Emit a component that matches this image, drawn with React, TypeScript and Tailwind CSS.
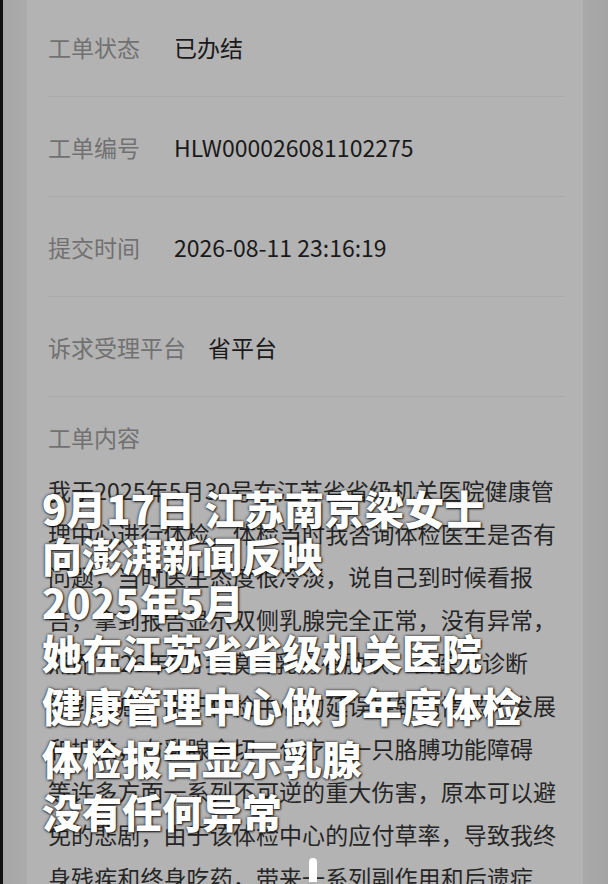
const rows = [
  { label: "工单状态", value: "已办结" },
  { label: "工单编号", value: "HLW000026081102275" },
  { label: "提交时间", value: "2026-08-11 23:16:19" },
  { label: "诉求受理平台", value: "省平台" },
];

const content = [
  "我于2025年5月30号在江苏省省级机关医院健康管",
  "理中心进行体检，体检当时我咨询体检医生是否有",
  "问题，当时医生态度很冷淡，说自己到时候看报",
  "告，拿到报告显示双侧乳腺完全正常，没有异常，",
  "然而2026年5月我摸到乳房有肿块，去医院诊断",
  "为乳腺癌，由于体检中心的延误导致病情恶化发展",
  "和扩散，右乳腺全切，化疗，一只胳膊功能障碍",
  "等许多方面一系列不可逆的重大伤害，原本可以避",
  "免的悲剧，由于该体检中心的应付草率，导致我终",
  "身残疾和终身吃药，带来一系列副作用和后遗症",
];

const captions = [
  "9月17日 江苏南京梁女士",
  "向澎湃新闻反映",
  "2025年5月",
  "她在江苏省省级机关医院",
  "健康管理中心做了年度体检",
  "体检报告显示乳腺",
  "没有任何异常",
];

const font = "font-['Noto_Sans_CJK_SC','Noto_Sans',sans-serif]";

export default function App() {
  return (
    <div className={`relative w-[608px] h-[884px] overflow-hidden flex bg-[#a8a8a8] ${font}`}>
      <div className="w-[3px] shrink-0 bg-[#111]" />
      <div className="w-[24px] shrink-0 bg-gradient-to-r from-[#a6a6a6] to-[#acacac]" />

      {/* card */}
      <div className="flex-1 min-w-0 overflow-hidden bg-[#b3b3b3] pl-[21px] pr-[19px]">
        <div className="-mt-[3px]">
          {rows.map((r) => (
            <div
              key={r.label}
              className="h-[100px] flex items-center border-b border-[#a9a9a9]"
            >
              <span className="min-w-[104px] mr-[22px] text-[23px] leading-[24px] text-[#717171] whitespace-nowrap">
                {r.label}
              </span>
              <span className="text-[23px] leading-[24px] text-[#1a1a1a] whitespace-nowrap">
                {r.value}
              </span>
            </div>
          ))}
        </div>

        <div className="pt-[28px] text-[23px] leading-[24px] text-[#717171]">工单内容</div>

        <div className="mt-[20px] text-[23px] leading-[43px] text-[#262626] tracking-[0.1px]">
          {content.map((line, i) => (
            <div key={i} className="whitespace-nowrap">
              {line}
            </div>
          ))}
        </div>
      </div>

      <div className="w-[25px] shrink-0 bg-gradient-to-r from-[#a9a9a9] to-[#a4a4a4]" />

      {/* subtitle overlay */}
      <div className="absolute left-[42px] top-[485px] text-white text-[40px] font-black [text-shadow:0_0_3px_rgba(0,0,0,0.9),1px_1px_2px_rgba(0,0,0,0.7)]">
        {captions.map((c, i) => (
          <div
            key={c}
            className={`whitespace-nowrap ${i < 3 ? "leading-[47px]" : "leading-[53px]"}`}
          >
            {c}
          </div>
        ))}
      </div>

      <div className="absolute left-[309px] top-[858px] w-[8px] h-[24px] rounded-t-full bg-white" />
    </div>
  );
}
